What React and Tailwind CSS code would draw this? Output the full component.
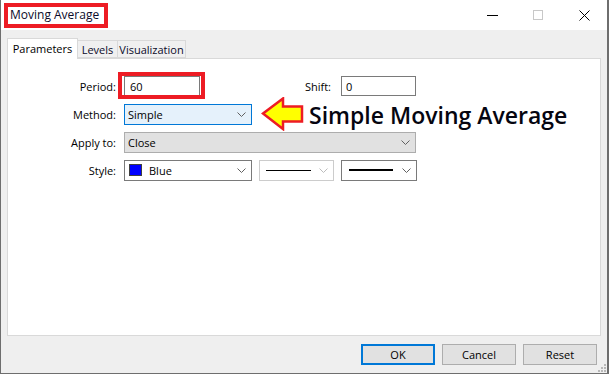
import React from "react";

const Chevron = ({ color = "#606060" }) => (
  <svg width="9" height="5" viewBox="0 0 9 5" className="shrink-0">
    <path d="M0.5 0.5 L4.5 4.5 L8.5 0.5" fill="none" stroke={color} strokeWidth="1" />
  </svg>
);

export default function App() {
  return (
    <div
      className="w-[609px] h-[374px] flex flex-col border-l border-r-2 border-b border-[#6e6e6e] bg-[#efefef] text-[11px] text-black overflow-hidden"
      style={{ fontFamily: '"Open Sans", "Noto Sans", sans-serif' }}
    >
      {/* Title bar */}
      <div className="h-[30px] bg-white flex items-center shrink-0 relative">
        <div className="ml-[3px] h-[25px] w-[104px] border-[4px] border-[#ed1c24] flex items-center pl-[2px] text-[12px] text-[#0b0b2a] leading-none">
          Moving Average
        </div>
        <div className="flex-1" />
        <div className="flex items-center h-full">
          <div className="w-[46px] h-full flex items-center justify-center">
            <div className="w-[11px] h-px bg-black" />
          </div>
          <div className="w-[46px] h-full flex items-center justify-center">
            <div className="w-[10px] h-[10px] border border-[#c8c8c8]" />
          </div>
          <div className="w-[46px] h-full flex items-center justify-center">
            <svg width="11" height="11" viewBox="0 0 11 11">
              <path d="M0.5 0.5 L10.5 10.5 M10.5 0.5 L0.5 10.5" stroke="#000" strokeWidth="1" fill="none" />
            </svg>
          </div>
        </div>
      </div>

      {/* Body */}
      <div className="flex-1 flex flex-col pl-[6px] pr-[6px] pt-[8px] relative">
        {/* Tabs */}
        <div className="flex items-end h-[20px] relative z-10">
          <div className="h-[21px] w-[71px] bg-white border border-b-0 border-[#d9d9d9] flex items-center justify-center leading-none mb-[-1px] pb-[2px]">
            Parameters
          </div>
          <div className="h-[18px] w-[40px] bg-[#f0f0f0] border border-l-0 border-[#d9d9d9] flex items-center justify-center leading-none text-[#0b0b2a]">
            Levels
          </div>
          <div className="h-[18px] w-[68px] bg-[#f0f0f0] border border-l-0 border-[#d9d9d9] flex items-center justify-center leading-none text-[#0b0b2a]">
            Visualization
          </div>
        </div>

        {/* Panel */}
        <div className="h-[278px] bg-white border border-[#d9d9d9] flex flex-col pt-[17px] gap-[8px]">
          {/* Period row */}
          <div className="flex items-center h-[20px]">
            <div className="w-[108px] text-right leading-none">Period:</div>
            <div className="ml-[8px] relative">
              <div className="absolute left-[-6px] top-[-4px] w-[87px] h-[27px] border-[4px] border-[#ed1c24] pointer-events-none" />
              <div className="w-[76px] h-[20px] border border-[#7a7a7a] bg-white flex items-center pl-[5px] leading-none">
                60
              </div>
            </div>
            <div className="w-[131px] text-right leading-none">Shift:</div>
            <div className="ml-[10px] w-[75px] h-[20px] border border-[#7a7a7a] bg-white flex items-center pl-[4px] leading-none">
              0
            </div>
          </div>

          {/* Method row */}
          <div className="flex items-center h-[20px]">
            <div className="w-[108px] text-right leading-none">Method:</div>
            <div className="ml-[8px] w-[128px] h-[21px] border border-[#0078d7] bg-[#e5f1fb] flex items-center pl-[3px] pr-[5px] leading-none">
              <span className="flex-1">Simple</span>
              <Chevron />
            </div>
            <svg width="44" height="34" viewBox="0 0 44 34" className="ml-[9px] shrink-0">
              <polygon
                points="2,16.5 22,1.5 22,9.5 41,9.5 41,24.5 22,24.5 22,32"
                fill="#ffff00"
                stroke="#ed1c24"
                strokeWidth="2.5"
                strokeLinejoin="miter"
              />
            </svg>
            <div className="ml-[4px] text-[23px] font-semibold leading-none whitespace-nowrap text-[#050510] mt-[2px]">
              Simple Moving Average
            </div>
          </div>

          {/* Apply to row */}
          <div className="flex items-center h-[20px]">
            <div className="w-[108px] text-right leading-none">Apply to:</div>
            <div className="ml-[8px] w-[292px] h-[21px] border border-[#adadad] bg-[#e1e1e1] flex items-center pl-[3px] pr-[5px] leading-none">
              <span className="flex-1">Close</span>
              <Chevron />
            </div>
          </div>

          {/* Style row */}
          <div className="flex items-center h-[20px]">
            <div className="w-[108px] text-right leading-none">Style:</div>
            <div className="ml-[8px] w-[128px] h-[21px] border border-[#7a7a7a] bg-white flex items-center pl-[4px] pr-[5px] leading-none">
              <div className="w-[13px] h-[12px] bg-[#0000ff] border border-[#404040]" />
              <span className="flex-1 ml-[7px]">Blue</span>
              <Chevron />
            </div>
            <div className="ml-[7px] w-[75px] h-[21px] border border-[#cccccc] bg-white flex items-center pl-[6px] pr-[5px]">
              <div className="w-[45px] h-px bg-black" />
              <div className="flex-1" />
              <Chevron color="#bcbcbc" />
            </div>
            <div className="ml-[7px] w-[76px] h-[21px] border border-[#7a7a7a] bg-white flex items-center pl-[7px] pr-[5px]">
              <div className="w-[44px] h-[2px] bg-black" />
              <div className="flex-1" />
              <Chevron />
            </div>
          </div>
        </div>

        {/* Buttons */}
        <div className="flex justify-end gap-[7px] mt-[8px] pr-[4px]">
          <div className="w-[74px] h-[21px] border-2 border-[#0078d7] bg-[#e1e1e1] flex items-center justify-center leading-none">
            OK
          </div>
          <div className="w-[74px] h-[21px] border border-[#adadad] bg-[#e1e1e1] flex items-center justify-center leading-none">
            Cancel
          </div>
          <div className="w-[74px] h-[21px] border border-[#adadad] bg-[#e1e1e1] flex items-center justify-center leading-none">
            Reset
          </div>
        </div>

        {/* Resize grip */}
        <svg width="9" height="9" viewBox="0 0 9 9" className="absolute right-[1px] bottom-[1px]">
          <rect x="7" y="1" width="2" height="2" fill="#b8b8b8" />
          <rect x="4" y="4" width="2" height="2" fill="#b8b8b8" />
          <rect x="7" y="4" width="2" height="2" fill="#b8b8b8" />
          <rect x="1" y="7" width="2" height="2" fill="#b8b8b8" />
          <rect x="4" y="7" width="2" height="2" fill="#b8b8b8" />
          <rect x="7" y="7" width="2" height="2" fill="#b8b8b8" />
        </svg>
      </div>
    </div>
  );
}
